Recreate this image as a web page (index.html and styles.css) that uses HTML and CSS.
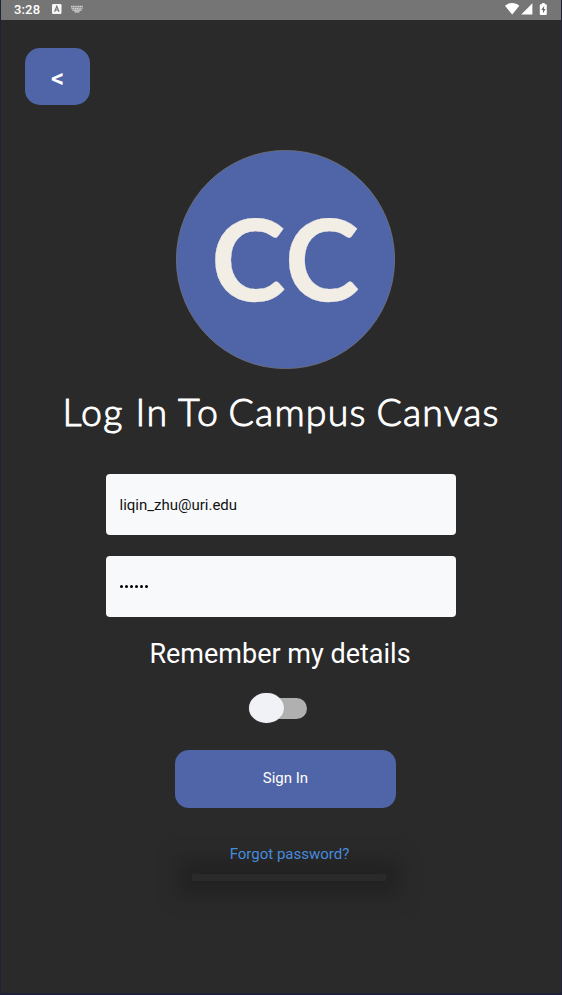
FILE: index.html
```html
<!DOCTYPE html>
<html lang="en">
<head>
<meta charset="utf-8">
<title>Campus Canvas</title>
<link rel="stylesheet" href="styles.css">
</head>
<body>
<div class="screen">
  <header class="status">
    <span class="clock">3:28</span>
    <svg class="app-icon" width="10" height="10" viewBox="0 0 10 10"><rect width="9.500" height="10" rx="1.2" fill="#f7f7f7"/><path d="M2.6 7.8 4.800 2.3 7 7.8M3.5 6h2.6" fill="none" stroke="#737373" stroke-width="1.2"/></svg>
    <svg class="keyboard-icon" width="12" height="8" viewBox="0 0 12 8" fill="none" stroke="#d6d6d6"><path d="M0 1.5h12M.5 3.5h11" stroke-width="1.3" stroke-dasharray="1.3 .45"/><path d="M1.5 5.2h9M3.5 6.8h5" stroke-width="1.2"/></svg>
    <svg class="signals" width="44" height="14" viewBox="0 0 44 14" fill="#fff"><path d="M0 3.8C4 .1 10.300 .1 14.300 3.800L7.200 12.600Z"/><path d="M16.200 12.600 27.400 1.300V12.600Z"/><path d="M37 1h2.700v1.200h1.100q1 0 1 1v8.900q0 1-1 1h-5q-1 0-1-1V3.200q0-1 1-1H37Z"/><path d="m39.300 3.800-3 4.100h1.700v3.400l2.500-4.300h-1.600Z" fill="#666"/></svg>
  </header>
  <main>
    <button class="back">&lt;</button>
    <svg class="logo" width="220" height="220" viewBox="0 0 220 220">
      <circle cx="110.500" cy="110.500" r="109.100" fill="#4f65a7" stroke="#717482" stroke-width=".8"/>
      <text x="36" y="152.300" textLength="148.500" lengthAdjust="spacing">CC</text>
    </svg>
    <svg class="title" width="460" height="60" viewBox="0 -5 460 60"><text y="35.500"><tspan x="11.500" textLength="60">Log</tspan> <tspan x="84.500" textLength="31.500">In</tspan> <tspan x="127" textLength="40">To</tspan> <tspan x="177.500" textLength="137">Campus</tspan> <tspan x="325.500" textLength="122">Canvas</tspan></text></svg>
    <form>
      <div class="field email">liqin_zhu@uri.edu</div>
      <div class="field password"><i></i><i></i><i></i><i></i><i></i><i></i></div>
      <div class="remember">Remember my details</div>
      <div class="switch"><span class="thumb"></span><span class="track"></span></div>
      <button class="signin" type="button">Sign In</button>
    </form>
    <div class="forgot">Forgot password?</div>
    <div class="strip"></div>
  </main>
</div>
</body>
</html>
```
FILE: styles.css
```css
* { box-sizing: border-box; }
body { margin: 0; background: #2a2a2a; font-family: Roboto, sans-serif; color: #fff; }
.screen { width: 562px; height: 995px; overflow: hidden; background: #2a2a2a; border: solid #20203a; border-width: 0 1px 2px; }
.status { height: 20px; background: #757575; display: flex; padding-left: 13px; }
.clock { width: 38px; font-size: 13px; line-height: 20px; font-weight: 500; letter-spacing: .15px; }
.app-icon { margin-top: 4px; }
.keyboard-icon { margin: 5px 0 0 9px; }
.signals { margin: 2px 12px 0 auto; }
main { display: flex; flex-direction: column; align-items: center; padding-top: 28px; }
button { border: 0; padding: 0; color: #fff; font-family: inherit; background: #5065a8; }
.back { align-self: flex-start; margin-left: 24px; width: 65px; height: 57px; border-radius: 15px; font-size: 26px; font-weight: 500; line-height: 57px; padding-top: 2px; }
.logo { margin: 44px 0 0 8px; flex: none; }
.logo text { font: 700 113px Lato, sans-serif; fill: #f2eee5; stroke: #f2eee5; stroke-width: .3px; stroke-linejoin: round; }
.title { margin: 16px 0 0 0; flex: none; overflow: visible; }
.title text { font: 300 37.5px Lato, sans-serif; fill: #fff; stroke: #fff; stroke-width: 1px; stroke-linejoin: round; }
form { width: 350px; margin-top: 29px; display: flex; flex-direction: column; align-items: center; }
.field { width: 350px; height: 61px; border-radius: 4px; background: #f8f9fb; color: #121212; padding: 0 13.5px; display: flex; align-items: center; font-size: 15px; }
.email { padding-top: 1px; }
.password { margin-top: 21px; gap: 2px; }
.password i { width: 3px; height: 3px; border-radius: 50%; background: #000; }
.remember { margin: 20px 0 0 -2px; height: 34px; line-height: 34px; font-size: 27px; white-space: nowrap; }
.switch { height: 30px; margin: 22px 0 0 -5px; width: 59px; display: flex; align-items: center; }
.thumb { width: 35px; height: 30px; border-radius: 50%; background: #f1f2f5; box-shadow: 0 0 1px #999; flex: none; z-index: 1; }
.track { width: 35px; height: 21px; margin-left: -12px; border-radius: 0 12px 12px 0; background: #b0b0b0; flex: none; }
.signin { margin: 27px 0 0 9px; width: 221px; height: 58px; border-radius: 14px; font-size: 15px; line-height: 54px; padding-bottom: 2px; }
.forgot { margin: 36px 0 0 17px; font-size: 15px; line-height: 20px; color: #478bdd; z-index: 1; }
.strip { width: 194px; height: 7px; margin: 10px 0 0 16px; background: #2a2a2a; box-shadow: 0 0 20px 14px #222; }
```
